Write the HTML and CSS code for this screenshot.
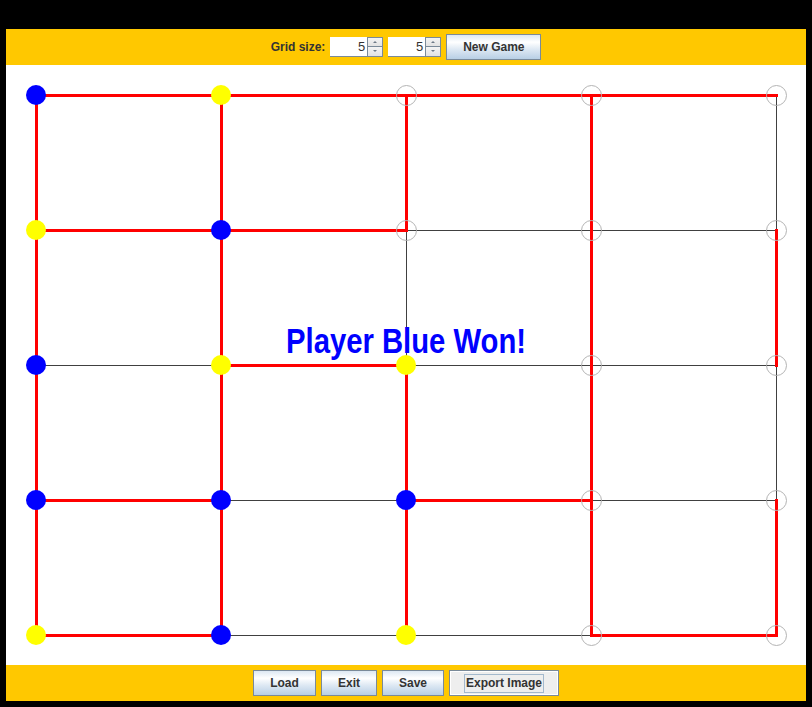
FILE: index.html
```html
<!DOCTYPE html>
<html>
<head>
<meta charset="utf-8">
<link rel="stylesheet" href="styles.css">
</head>
<body>
<div class="window">
  <div class="toolbar">
    <span class="label">Grid size:</span>
    <div class="spinner">
      <div class="field">5</div>
      <div class="arrows">
        <div class="arrow up"><span></span></div>
        <div class="arrow down"><span></span></div>
      </div>
    </div>
    <div class="spinner">
      <div class="field">5</div>
      <div class="arrows">
        <div class="arrow up"><span></span></div>
        <div class="arrow down"><span></span></div>
      </div>
    </div>
    <button class="btn w-new">New Game</button>
  </div>
  <div class="board">
    <svg width="800" height="600" viewBox="0 0 800 600">
      <g stroke="#404040" stroke-width="1">
        <line x1="30.5" y1="30.5" x2="770.5" y2="30.5"/>
        <line x1="30.5" y1="165.5" x2="770.5" y2="165.5"/>
        <line x1="30.5" y1="300.5" x2="770.5" y2="300.5"/>
        <line x1="30.5" y1="435.5" x2="770.5" y2="435.5"/>
        <line x1="30.5" y1="570.5" x2="770.5" y2="570.5"/>
        <line x1="30.5" y1="30.5" x2="30.5" y2="570.5"/>
        <line x1="215.5" y1="30.5" x2="215.5" y2="570.5"/>
        <line x1="400.5" y1="30.5" x2="400.5" y2="570.5"/>
        <line x1="585.5" y1="30.5" x2="585.5" y2="570.5"/>
        <line x1="770.5" y1="30.5" x2="770.5" y2="570.5"/>
      </g>
      <g stroke="#ff0000" stroke-width="3" stroke-linecap="square">
        <line x1="30.5" y1="30.5" x2="770.5" y2="30.5"/>
        <line x1="30.5" y1="165.5" x2="400.5" y2="165.5"/>
        <line x1="215.5" y1="300.5" x2="400.5" y2="300.5"/>
        <line x1="30.5" y1="435.5" x2="215.5" y2="435.5"/>
        <line x1="400.5" y1="435.5" x2="585.5" y2="435.5"/>
        <line x1="30.5" y1="570.5" x2="215.5" y2="570.5"/>
        <line x1="585.5" y1="570.5" x2="770.5" y2="570.5"/>
        <line x1="30.5" y1="30.5" x2="30.5" y2="570.5"/>
        <line x1="215.5" y1="30.5" x2="215.5" y2="570.5"/>
        <line x1="400.5" y1="30.5" x2="400.5" y2="165.5"/>
        <line x1="400.5" y1="300.5" x2="400.5" y2="570.5"/>
        <line x1="585.5" y1="30.5" x2="585.5" y2="570.5"/>
        <line x1="770.5" y1="165.5" x2="770.5" y2="300.5"/>
        <line x1="770.5" y1="435.5" x2="770.5" y2="570.5"/>
      </g>
      <g fill="none" stroke="#b4b4b4" stroke-width="1">
        <circle cx="400.5" cy="30.5" r="10"/>
        <circle cx="585.5" cy="30.5" r="10"/>
        <circle cx="770.5" cy="30.5" r="10"/>
        <circle cx="400.5" cy="165.5" r="10"/>
        <circle cx="585.5" cy="165.5" r="10"/>
        <circle cx="770.5" cy="165.5" r="10"/>
        <circle cx="585.5" cy="300.5" r="10"/>
        <circle cx="770.5" cy="300.5" r="10"/>
        <circle cx="585.5" cy="435.5" r="10"/>
        <circle cx="770.5" cy="435.5" r="10"/>
        <circle cx="585.5" cy="570.5" r="10"/>
        <circle cx="770.5" cy="570.5" r="10"/>
      </g>
      <g fill="#0000ff">
        <circle cx="30" cy="30" r="10"/>
        <circle cx="215" cy="165" r="10"/>
        <circle cx="30" cy="300" r="10"/>
        <circle cx="30" cy="435" r="10"/>
        <circle cx="215" cy="435" r="10"/>
        <circle cx="400" cy="435" r="10"/>
        <circle cx="215" cy="570" r="10"/>
      </g>
      <g fill="#ffff00">
        <circle cx="215" cy="30" r="10"/>
        <circle cx="30" cy="165" r="10"/>
        <circle cx="215" cy="300" r="10"/>
        <circle cx="400" cy="300" r="10"/>
        <circle cx="30" cy="570" r="10"/>
        <circle cx="400" cy="570" r="10"/>
      </g>
      <text class="win" x="280" y="288" textLength="240" lengthAdjust="spacingAndGlyphs">Player Blue Won!</text>
    </svg>
  </div>
  <div class="toolbar">
    <button class="btn w-load">Load</button>
    <button class="btn w-exit">Exit</button>
    <button class="btn w-save">Save</button>
    <button class="btn w-export focused"><span class="focus">Export Image</span></button>
  </div>
</div>
</body>
</html>
```
FILE: styles.css
```css
html, body {
  margin: 0;
  padding: 0;
  background: #000;
}
body {
  width: 812px;
  height: 707px;
  overflow: hidden;
}
.window {
  margin: 29px 0 0 6px;
  width: 800px;
  display: flex;
  flex-direction: column;
}
.toolbar {
  height: 36px;
  background: #ffc800;
  display: flex;
  align-items: center;
  justify-content: center;
  gap: 5px;
  font-family: "Liberation Sans", Arial, sans-serif;
}
.label {
  font-weight: bold;
  font-size: 12px;
  color: #333;
  margin-top: -1px;
}
.spinner {
  display: flex;
  width: 53px;
  height: 20px;
  box-sizing: border-box;
  margin-top: -1px;
}
.field {
  flex: 1;
  background: #fff;
  border-bottom: 1px solid #7a8a99;
  font-size: 13px;
  line-height: 19px;
  color: #333;
  text-align: right;
  padding-right: 2px;
}
.arrows {
  width: 16px;
  display: flex;
  flex-direction: column;
  border: 1px solid #7a8a99;
  box-sizing: border-box;
}
.arrow {
  flex: 1;
  background: linear-gradient(#f4f4f4, #e2e2e2);
  display: flex;
  align-items: center;
  justify-content: center;
}
.arrow.up {
  border-bottom: 1px solid #7a8a99;
}
.arrow span {
  width: 0;
  height: 0;
  border-left: 2px solid transparent;
  border-right: 2px solid transparent;
}
.arrow.up span {
  border-bottom: 2px solid #6f7b88;
}
.arrow.down span {
  border-top: 2px solid #6f7b88;
}
.btn {
  height: 26px;
  box-sizing: border-box;
  border: 1px solid #7a8a99;
  background: linear-gradient(#dde8f3 0%, #ffffff 30%, #dde8f3 60%, #b8cfe5 100%);
  font-family: "Liberation Sans", Arial, sans-serif;
  font-weight: bold;
  font-size: 12px;
  color: #333;
  padding: 0;
  display: flex;
  align-items: center;
  justify-content: center;
}
.w-new { width: 95px; }
.w-load { width: 63px; }
.w-exit { width: 56px; }
.w-save { width: 62px; }
.w-export { width: 110px; }
.btn.focused {
  background: #eeeeee;
  box-shadow: inset 0 0 0 1px #ffffff;
}
.focus {
  border: 1px solid #a3b8cc;
  line-height: 17px;
  padding: 0 1px;
}
.board {
  height: 600px;
  background: #fff;
}
.board svg {
  display: block;
}
.win {
  font-family: "Liberation Sans", Arial, sans-serif;
  font-weight: bold;
  font-size: 35px;
  fill: #0000ff;
}
```
